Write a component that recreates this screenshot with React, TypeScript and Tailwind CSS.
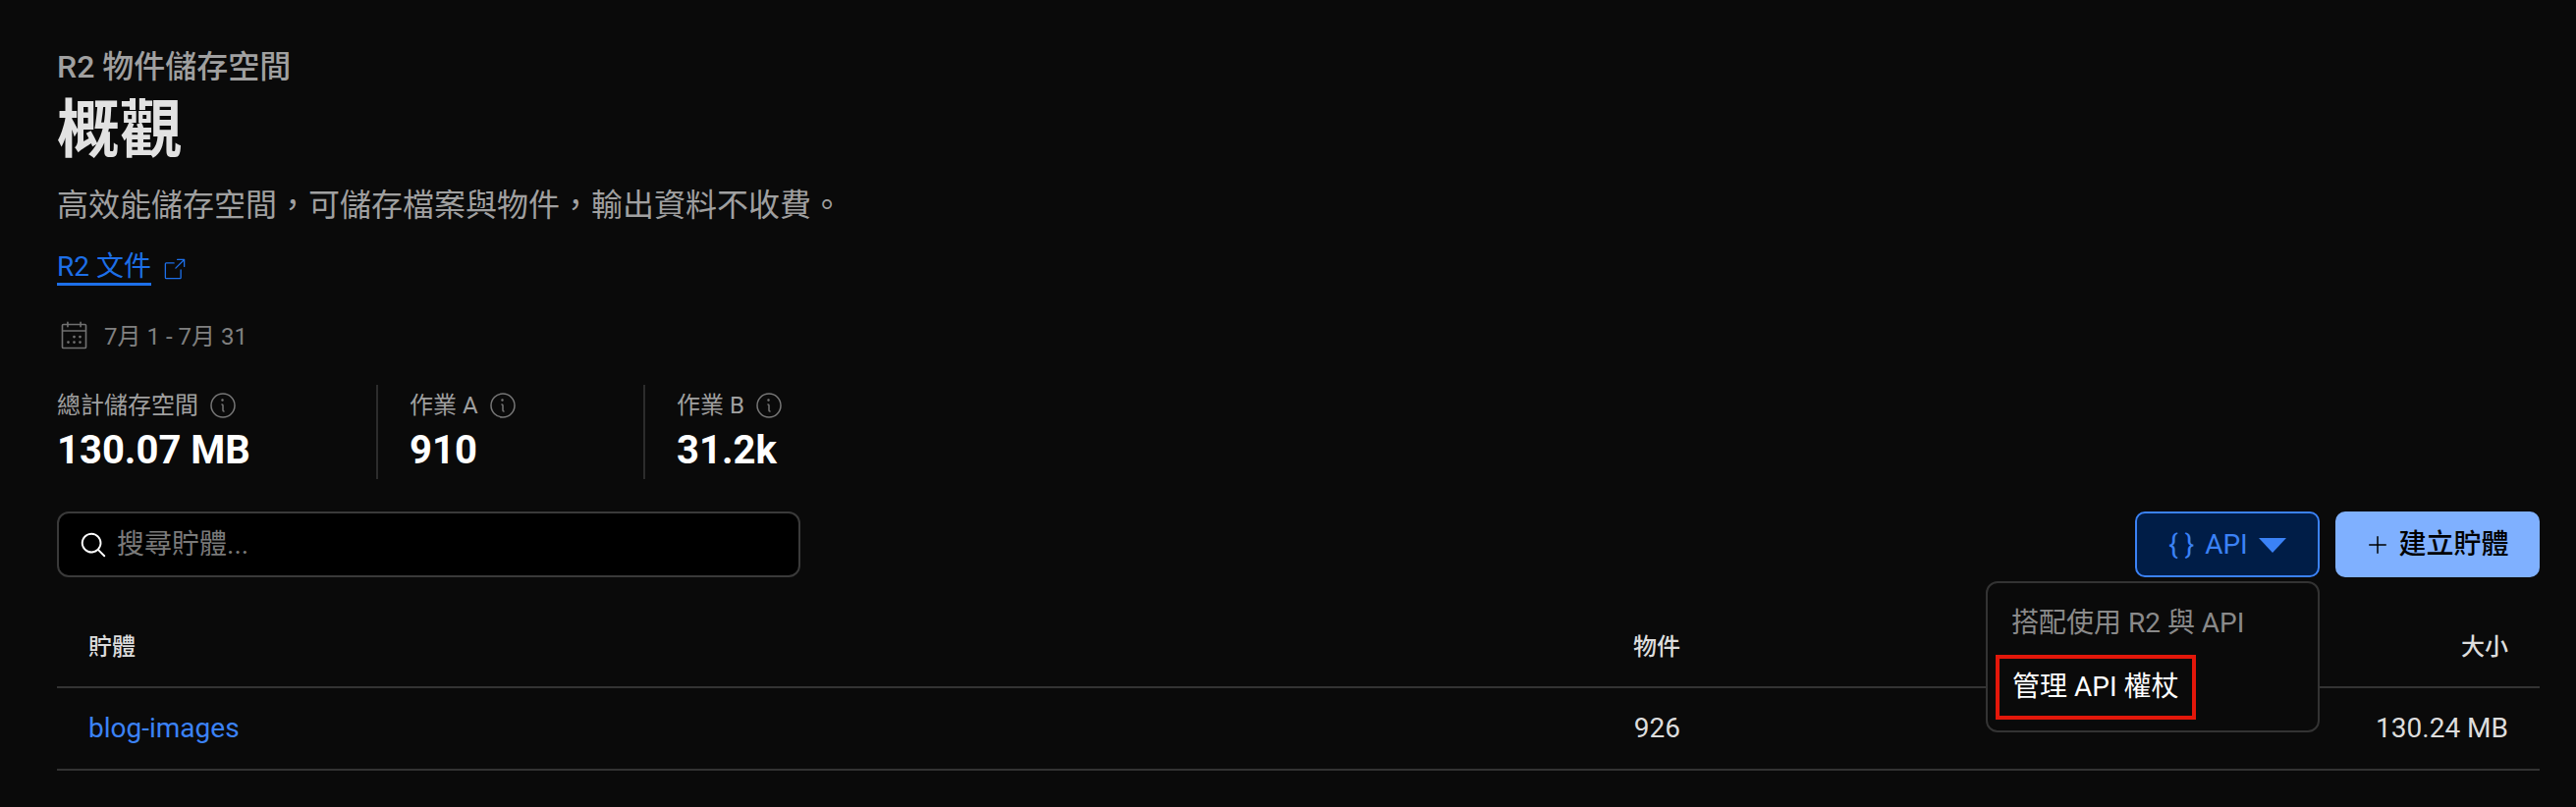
import { PiArrowSquareOutLight, PiInfoLight, PiMagnifyingGlass, PiPlus, PiCalendarDotsLight } from "react-icons/pi";

const cjk = `font-['Roboto','Noto_Sans_CJK_TC',sans-serif]`;

const stats = [
  { label: "總計儲存空間", value: "130.07 MB", width: "w-[325px]" },
  { label: "作業 A", value: "910", width: "w-[272px]" },
  { label: "作業 B", value: "31.2k", width: "w-[150px]" },
];

function Stat({ label, value, width, first }: { label: string; value: string; width: string; first: boolean }) {
  return (
    <div className={`${width} h-[96px] flex flex-col justify-center ${first ? "" : "border-l-2 border-[#2c2c2c] pl-[32px]"}`}>
      <div className="flex items-center gap-[9px] h-[30px] text-[24px] text-[#a0a0a0]">
        {label}
        <PiInfoLight className="text-[32px] text-[#777777]" />
      </div>
      <div className="mt-[8px] text-[40px] leading-[46px] font-bold text-white">{value}</div>
    </div>
  );
}

export default function App() {
  return (
    <div className={`min-h-[822px] bg-[#0a0a0a] pt-[49px] pl-[58px] pr-[37px] ${cjk}`}>
      <div className="text-[32px] leading-[38px] font-medium text-[#a0a0a0]">R2 物件儲存空間</div>
      <h1 className="mt-[9px] text-[64px] leading-[74px] font-bold text-[#e2e2e2]">概觀</h1>
      <p className="mt-[17px] text-[32px] leading-[44px] text-[#a0a0a0]">高效能儲存空間，可儲存檔案與物件，輸出資料不收費。</p>
      <a className="mt-[25px] flex items-center text-[28px] leading-[32px] text-[#1d6fe8]">
        <span className="border-b-[3px] border-[#1d6fe8]">R2 文件</span>
        <PiArrowSquareOutLight className="ml-[10px] text-[28px]" />
      </a>

      <div className="mt-[34px] flex items-center gap-[13px] text-[24px] leading-[32px] text-[#808080]">
        <PiCalendarDotsLight className="text-[35px] text-[#707070]" />
        7月 1 - 7月 31
      </div>

      <div className="mt-[32px] flex">
        {stats.map((s, i) => (
          <Stat key={s.label} {...s} first={i === 0} />
        ))}
      </div>

      <div className="relative mt-[33px] flex justify-between">
        <div className="w-[757px] h-[67px] flex items-center gap-[9px] pl-[20px] rounded-[12px] border-2 border-[#3a3a3a] bg-black text-[28px] text-[#7a7a7a]">
          <PiMagnifyingGlass className="text-[30px] text-white" />
          搜尋貯體...
        </div>
        <div className="flex gap-[16px]">
          <button className="w-[188px] h-[67px] flex items-center justify-center gap-[11px] rounded-[10px] border-2 border-[#3b82f6] bg-[#001d47] text-[28px] text-[#3b82f6]">
            <span>{"{ }"}</span>
            <span className="flex items-center gap-[11px]">
              API
              <svg width="28" height="16" viewBox="0 0 28 16" className="fill-[#3b82f6]">
                <path d="M0 1h28L14 16z" />
              </svg>
            </span>
          </button>
          <button className="w-[208px] h-[67px] flex items-center justify-center gap-[9px] rounded-[10px] bg-[#7fb0ff] text-[28px] font-medium text-black">
            <PiPlus className="text-[24px]" />
            建立貯體
          </button>
        </div>
        <div className="absolute right-[224px] top-[71px] z-10 w-[340px] h-[154px] rounded-[12px] border-2 border-[#333333] bg-[#0a0a0a] pl-[8px] pt-[21px]">
          <div className="pl-[16px] text-[28px] leading-[40px] text-[#8a8a8a]">搭配使用 R2 與 API</div>
          <div className="mt-[12px] w-[204px] h-[66px] flex items-center pl-[13px] border-[4px] border-[#e3170a] text-[28px] text-white">管理 API 權杖</div>
        </div>
      </div>

      <table className="mt-[30px] w-full border-collapse">
        <thead>
          <tr className="h-[82px] border-b-2 border-[#333333] text-[24px] text-[#dddddd]">
            <th className="pl-[32px] text-left font-medium">貯體</th>
            <th className="w-[200px] text-right font-medium">物件</th>
            <th className="w-[875px] pr-[32px] text-right font-medium">大小</th>
          </tr>
        </thead>
        <tbody>
          <tr className="h-[84px] border-b-2 border-[#333333] text-[28px] text-[#dddddd]">
            <td className="pl-[32px] text-[#3b82f6]">blog-images</td>
            <td className="text-right">926</td>
            <td className="pr-[32px] text-right">130.24 MB</td>
          </tr>
        </tbody>
      </table>
    </div>
  );
}
